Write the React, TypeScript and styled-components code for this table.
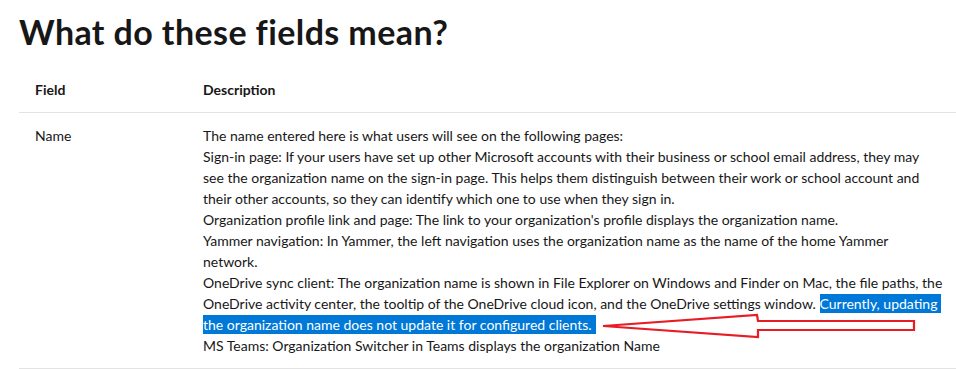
import React from "react";
import styled, { createGlobalStyle } from "styled-components";

const GlobalStyle = createGlobalStyle`
  html, body {
    margin: 0;
    padding: 0;
    background: #ffffff;
  }
  body {
    font-family: "Lato", "Liberation Sans", sans-serif;
    color: #171717;
    -webkit-font-smoothing: antialiased;
  }
`;

const Page = styled.div`
  position: relative;
  width: 956px;
  height: 369px;
  overflow: hidden;
  padding: 11px 0 0 19px;
  box-sizing: border-box;
`;

const Heading = styled.h2`
  margin: 0 0 14px 0;
  font-size: 34px;
  line-height: 42px;
  letter-spacing: 0.4px;
  font-weight: 700;
  color: #171717;
`;

const Table = styled.div`
  width: 937px;
  display: flex;
  flex-direction: column;
`;

const Row = styled.div`
  display: grid;
  grid-template-columns: 168px 1fr;
  border-bottom: 1px solid #e3e3e3;
`;

const Cell = styled.div<{ $header?: boolean }>`
  padding: 12px 16px;
  font-size: 14px;
  line-height: 21px;
  font-weight: ${(p) => (p.$header ? 700 : 400)};
  color: #171717;
`;

const Line = styled.div`
  white-space: nowrap;
`;

const Selected = styled.span`
  background: #0078d7;
  color: #ffffff;
  padding: 1px 4px 1px 0;
`;

const Overlay = styled.svg`
  position: absolute;
  left: 0;
  top: 0;
  pointer-events: none;
`;

const lines: React.ReactNode[] = [
  "The name entered here is what users will see on the following pages:",
  "Sign-in page: If your users have set up other Microsoft accounts with their business or school email address, they may",
  "see the organization name on the sign-in page. This helps them distinguish between their work or school account and",
  "their other accounts, so they can identify which one to use when they sign in.",
  "Organization profile link and page: The link to your organization's profile displays the organization name.",
  "Yammer navigation: In Yammer, the left navigation uses the organization name as the name of the home Yammer",
  "network.",
  "OneDrive sync client: The organization name is shown in File Explorer on Windows and Finder on Mac, the file paths, the",
  <>
    OneDrive activity center, the tooltip of the OneDrive cloud icon, and the OneDrive settings window.{" "}
    <Selected>Currently, updating</Selected>
  </>,
  <Selected>the organization name does not update it for configured clients.</Selected>,
  "MS Teams: Organization Switcher in Teams displays the organization Name",
];

export default function App() {
  return (
    <>
      <GlobalStyle />
      <Page>
        <Heading>What do these fields mean?</Heading>
        <Table>
          <Row>
            <Cell $header>Field</Cell>
            <Cell $header>Description</Cell>
          </Row>
          <Row>
            <Cell>Name</Cell>
            <Cell>
              {lines.map((l, i) => (
                <Line key={i}>{l}</Line>
              ))}
            </Cell>
          </Row>
        </Table>
        <Overlay width="956" height="369" viewBox="0 0 956 369">
          <polygon
            points="603,326 757,315 758,321 914,321 914,330 758,330 758,337"
            fill="none"
            stroke="#e81c24"
            strokeWidth="2.2"
            strokeLinejoin="miter"
          />
        </Overlay>
      </Page>
    </>
  );
}
